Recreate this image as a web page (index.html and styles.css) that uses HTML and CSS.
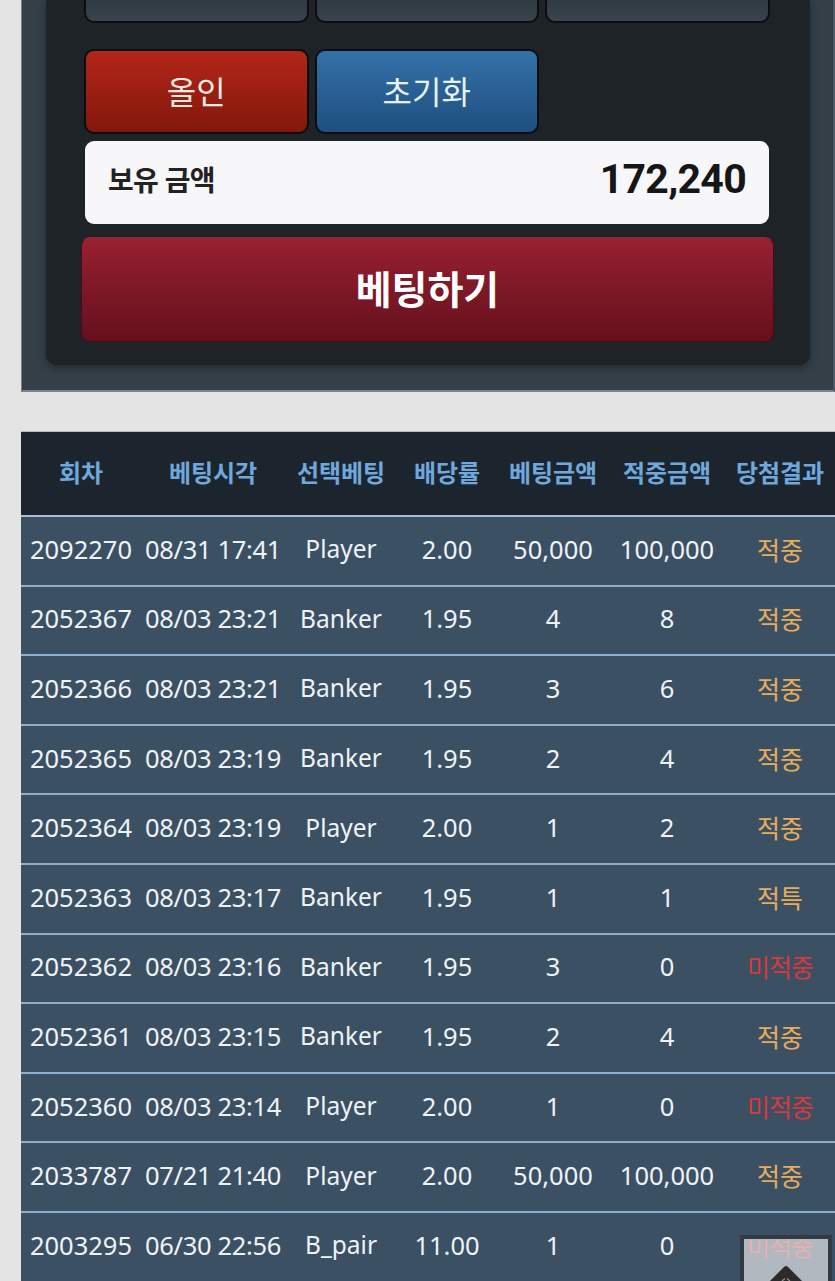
FILE: index.html
```html
<!DOCTYPE html>
<html>
<head>
    <meta charset="utf-8">
    <title>베팅</title>
    <link rel="stylesheet" href="styles.css">
</head>
<body>
<section class="bet-panel">
    <div class="bet-inner">
        <div class="btn-row top-row">
            <a class="chip"></a>
            <a class="chip"></a>
            <a class="chip"></a>
        </div>
        <div class="btn-row">
            <a class="chip chip-red">올인</a>
            <a class="chip chip-blue">초기화</a>
        </div>
        <div class="balance">
            <span class="balance-label">보유 금액</span>
            <span class="balance-value">172,240</span>
        </div>
        <a class="bet-button">베팅하기</a>
    </div>
</section>

<table class="history">
    <thead>
    <tr>
        <th>회차</th>
        <th>베팅시각</th>
        <th>선택베팅</th>
        <th>배당률</th>
        <th>베팅금액</th>
        <th>적중금액</th>
        <th>당첨결과</th>
    </tr>
    </thead>
    <tbody>
    <tr><td>2092270</td><td>08/31 17:41</td><td>Player</td><td>2.00</td><td>50,000</td><td>100,000</td><td class="win">적중</td></tr>
    <tr><td>2052367</td><td>08/03 23:21</td><td>Banker</td><td>1.95</td><td>4</td><td>8</td><td class="win">적중</td></tr>
    <tr><td>2052366</td><td>08/03 23:21</td><td>Banker</td><td>1.95</td><td>3</td><td>6</td><td class="win">적중</td></tr>
    <tr><td>2052365</td><td>08/03 23:19</td><td>Banker</td><td>1.95</td><td>2</td><td>4</td><td class="win">적중</td></tr>
    <tr><td>2052364</td><td>08/03 23:19</td><td>Player</td><td>2.00</td><td>1</td><td>2</td><td class="win">적중</td></tr>
    <tr><td>2052363</td><td>08/03 23:17</td><td>Banker</td><td>1.95</td><td>1</td><td>1</td><td class="win">적특</td></tr>
    <tr><td>2052362</td><td>08/03 23:16</td><td>Banker</td><td>1.95</td><td>3</td><td>0</td><td class="lose">미적중</td></tr>
    <tr><td>2052361</td><td>08/03 23:15</td><td>Banker</td><td>1.95</td><td>2</td><td>4</td><td class="win">적중</td></tr>
    <tr><td>2052360</td><td>08/03 23:14</td><td>Player</td><td>2.00</td><td>1</td><td>0</td><td class="lose">미적중</td></tr>
    <tr><td>2033787</td><td>07/21 21:40</td><td>Player</td><td>2.00</td><td>50,000</td><td>100,000</td><td class="win">적중</td></tr>
    <tr><td>2003295</td><td>06/30 22:56</td><td>B_pair</td><td>11.00</td><td>1</td><td>0</td><td class="lose">미적중</td></tr>
    </tbody>
</table>

<a class="to-top">
    <svg class="to-top-arrow" width="32" height="15" viewBox="0 0 32 15">
        <path d="M16 0 Q17 0 18 1 L32 15 L0 15 L14 1 Q15 0 16 0 Z" fill="#2b2b2b"/>
        <path d="M12 15 L15 12.5 M20 15 L17 12.5" stroke="#8d9298" stroke-width="1.2" fill="none"/>
    </svg>
</a>
</body>
</html>
```

FILE: styles.css
```css
html, body {
    margin: 0;
    padding: 0;
}

body {
    position: relative;
    height: 1281px;
    overflow: hidden;
    background-color: #e4e4e4;
    font-family: "Noto Sans", "Noto Sans CJK KR", sans-serif;
}

/* Top betting panel */
.bet-panel {
    box-sizing: border-box;
    height: 392px;
    margin-left: 21px;
    padding: 0 23px 0 24px;
    background-color: #353f48;
    border-left: 1px solid #77838d;
    border-right: 2px solid #4d5a66;
    border-bottom: 2px solid #77838d;
}

.bet-inner {
    box-sizing: border-box;
    height: 365px;
    padding: 0 36px 0 38px;
    background-color: #1e2328;
    border-radius: 0 0 10px 10px;
    box-shadow: 0 3px 8px rgba(0, 0, 0, 0.35);
}

.btn-row {
    display: flex;
    gap: 6px;
    margin-bottom: 7px;
}

.top-row {
    margin-bottom: 26px;
}

.chip {
    box-sizing: border-box;
    display: block;
    width: 224.5px;
    height: 85px;
    line-height: 81px;
    text-align: center;
    font-size: 32px;
    color: #f3e9e6;
    border: 2px solid #0b0d10;
    border-radius: 10px;
    background: linear-gradient(#b32618, #84170c);
}

/* Only the bottom of this row is still on screen */
.top-row .chip {
    height: 23px;
    border-top: none;
    border-radius: 0 0 10px 10px;
    background: linear-gradient(#303a43, #39444e);
}

.chip-blue {
    color: #e8f1f6;
    background: linear-gradient(#3371a8, #1f4f80);
}

.balance {
    box-sizing: border-box;
    display: flex;
    justify-content: space-between;
    align-items: center;
    width: 684px;
    height: 83px;
    margin: 0 0 13px 1px;
    padding: 0 23px 8px;
    background-color: #f7f7f9;
    border-radius: 9px;
}

.balance-label {
    font-size: 28px;
    font-weight: bold;
    letter-spacing: -0.7px;
    color: #222;
}

.balance-value {
    font-family: Roboto, sans-serif;
    font-size: 41px;
    font-weight: bold;
    letter-spacing: -0.7px;
    color: #161616;
}

.bet-button {
    box-sizing: border-box;
    display: block;
    width: 693px;
    height: 105px;
    margin-left: -3px;
    line-height: 101px;
    text-align: center;
    font-size: 39px;
    font-weight: bold;
    color: #fff;
    border: 1px solid #4d0a12;
    border-top-color: #8a2c35;
    border-radius: 9px;
    background: linear-gradient(#982031, #64101c);
}

/* History table */
.history {
    width: 814px;
    margin: 39px 0 0 21px;
    border-collapse: separate;
    border-spacing: 0;
    table-layout: fixed;
    color: #eef3f7;
    font-size: 25.5px;
}

.history th {
    box-sizing: border-box;
    height: 86px;
    padding: 0 0 4px;
    font-size: 24px;
    font-weight: bold;
    letter-spacing: -0.1px;
    color: #6ea8dc;
    background-color: #1c252e;
    border-top: 1px solid #b4bcc4;
    border-bottom: 2px solid #a9bccb;
}

.history td {
    box-sizing: border-box;
    height: 69.6px;
    padding: 0 0 4px;
    text-align: center;
    white-space: nowrap;
    background-color: #3c5064;
    border-bottom: 2px solid #8fb0cc;
}

.history th:nth-child(1) { width: 120px; }
.history th:nth-child(2) { width: 144px; }
.history th:nth-child(3) { width: 112px; }
.history th:nth-child(4) { width: 100px; }
.history th:nth-child(5) { width: 112px; }
.history th:nth-child(6) { width: 116px; }
.history th:nth-child(7) { width: 110px; }

.history td:nth-child(2) {
    letter-spacing: -0.35px;
}

.history td:nth-child(3) {
    font-size: 24.5px;
}

.history .win {
    font-size: 25px;
    color: #e7ad5a;
}

.history .lose {
    font-size: 25px;
    letter-spacing: -1px;
    color: #d8393a;
}

/* Floating back-to-top button */
.to-top {
    position: absolute;
    left: 740px;
    top: 1235px;
    box-sizing: border-box;
    display: flex;
    justify-content: center;
    align-items: flex-end;
    width: 92px;
    height: 46px;
    background-color: rgba(240, 240, 240, 0.65);
    border: 4px solid #333b42;
    border-bottom: none;
}

.to-top-arrow {
    display: block;
}
```
